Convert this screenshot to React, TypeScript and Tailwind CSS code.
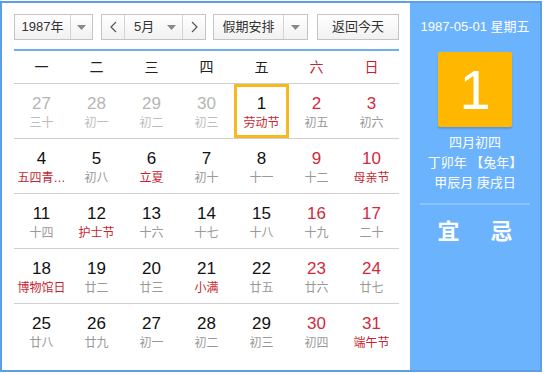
import { ReactNode } from 'react';

type Day = { n: number; l: string; kind: 'prev' | 'cur'; red?: boolean; fest?: boolean; today?: boolean };

const weekdays = ['一', '二', '三', '四', '五', '六', '日'];

const rows: Day[][] = [
  [
    { n: 27, l: '三十', kind: 'prev' },
    { n: 28, l: '初一', kind: 'prev' },
    { n: 29, l: '初二', kind: 'prev' },
    { n: 30, l: '初三', kind: 'prev' },
    { n: 1, l: '劳动节', kind: 'cur', fest: true, today: true },
    { n: 2, l: '初五', kind: 'cur', red: true },
    { n: 3, l: '初六', kind: 'cur', red: true },
  ],
  [
    { n: 4, l: '五四青…', kind: 'cur', fest: true },
    { n: 5, l: '初八', kind: 'cur' },
    { n: 6, l: '立夏', kind: 'cur', fest: true },
    { n: 7, l: '初十', kind: 'cur' },
    { n: 8, l: '十一', kind: 'cur' },
    { n: 9, l: '十二', kind: 'cur', red: true },
    { n: 10, l: '母亲节', kind: 'cur', red: true, fest: true },
  ],
  [
    { n: 11, l: '十四', kind: 'cur' },
    { n: 12, l: '护士节', kind: 'cur', fest: true },
    { n: 13, l: '十六', kind: 'cur' },
    { n: 14, l: '十七', kind: 'cur' },
    { n: 15, l: '十八', kind: 'cur' },
    { n: 16, l: '十九', kind: 'cur', red: true },
    { n: 17, l: '二十', kind: 'cur', red: true },
  ],
  [
    { n: 18, l: '博物馆日', kind: 'cur', fest: true },
    { n: 19, l: '廿二', kind: 'cur' },
    { n: 20, l: '廿三', kind: 'cur' },
    { n: 21, l: '小满', kind: 'cur', fest: true },
    { n: 22, l: '廿五', kind: 'cur' },
    { n: 23, l: '廿六', kind: 'cur', red: true },
    { n: 24, l: '廿七', kind: 'cur', red: true },
  ],
  [
    { n: 25, l: '廿八', kind: 'cur' },
    { n: 26, l: '廿九', kind: 'cur' },
    { n: 27, l: '初一', kind: 'cur' },
    { n: 28, l: '初二', kind: 'cur' },
    { n: 29, l: '初三', kind: 'cur' },
    { n: 30, l: '初四', kind: 'cur', red: true },
    { n: 31, l: '端午节', kind: 'cur', red: true, fest: true },
  ],
];

const Caret = () => (
  <svg width="9" height="5" viewBox="0 0 9 5">
    <path d="M0 0h9L4.5 5z" fill="#888" />
  </svg>
);

// thin chevron for the month arrows
const Chevron = ({ left }: { left?: boolean }) => (
  <svg width="7" height="12" viewBox="0 0 7 12">
    <path d={left ? 'M6 1L1 6l5 5' : 'M1 1l5 5-5 5'} fill="none" stroke="#555" strokeWidth="1.2" />
  </svg>
);

const Box = ({ className, children }: { className: string; children: ReactNode }) => (
  <div
    className={`flex h-[26px] items-stretch border border-[#c4c4c4] bg-gradient-to-b from-white to-[#f1f1f1] text-[13px] text-[#333] ${className}`}
  >
    {children}
  </div>
);

const Cell = ({ d }: { d: Day }) => {
  const numColor = d.kind === 'prev' ? 'text-[#b5b5b5]' : d.red ? 'text-[#d22a3c]' : 'text-[#111]';
  const lunarColor = d.fest ? 'text-[#c91f30]' : d.kind === 'prev' ? 'text-[#bcbcbc]' : 'text-[#999]';
  return (
    <div
      className={`flex h-[54px] flex-col items-center ${
        d.today ? 'border-[3px] border-[#f6b922] pt-[7px]' : 'pt-[10px]'
      }`}
    >
      <span className={`font-['Liberation_Sans',sans-serif] text-[17px] leading-[20px] ${numColor}`}>{d.n}</span>
      <span className={`whitespace-nowrap text-[12px] leading-[18px] ${lunarColor}`}>{d.l}</span>
    </div>
  );
};

const App = () => {
  return (
    <div className="h-[374px] w-[544px] bg-white pt-px font-['Liberation_Sans','Noto_Sans_CJK_SC',sans-serif]">
      <div className="flex h-[371px] w-[542px] border-2 border-[#5c9fe6]">
        <div className="w-[408px] px-[12px] pt-[11px]">
          <div className="flex w-[385px] items-center">
            <Box className="w-[79px]">
              <span className="flex flex-1 items-center justify-center">1987年</span>
              <span className="flex w-[22px] items-center justify-center border-l border-[#d4d4d4]">
                <Caret />
              </span>
            </Box>
            <Box className="ml-[8px] w-[105px]">
              <span className="flex w-[23px] items-center justify-center border-r border-[#d4d4d4]">
                <Chevron left />
              </span>
              <span className="flex flex-1 items-center justify-between pl-[9px] pr-[6px]">
                5月
                <Caret />
              </span>
              <span className="flex w-[23px] items-center justify-center border-l border-[#d4d4d4]">
                <Chevron />
              </span>
            </Box>
            <Box className="ml-[7px] w-[95px]">
              <span className="flex flex-1 items-center justify-center">假期安排</span>
              <span className="flex w-[24px] items-center justify-center border-l border-[#d4d4d4]">
                <Caret />
              </span>
            </Box>
            <Box className="ml-[9px] w-[82px] justify-center">
              <span className="flex items-center">返回今天</span>
            </Box>
          </div>
          <div className="mt-[9px] h-[2px] w-[385px] bg-[#6eaff0]" />
          <div className="grid h-[33px] w-[385px] grid-cols-7 items-center border-b border-[#cfcfcf] text-[14px]">
            {weekdays.map((w, i) => (
              <span key={w} className={`text-center ${i > 4 ? 'text-[#c91f30]' : 'text-[#222]'}`}>
                {w}
              </span>
            ))}
          </div>
          {rows.map((r, i) => (
            <div
              key={i}
              className={`grid w-[385px] grid-cols-7 ${i < 4 ? 'border-b border-[#cfcfcf]' : ''}`}
            >
              {r.map((d) => (
                <Cell key={`${d.kind}${d.n}`} d={d} />
              ))}
            </div>
          ))}
        </div>
        <div className="flex flex-1 flex-col items-center bg-[#6cb3fe] text-white">
          <div className="mt-[14px] text-[13px] leading-[20px]">1987-05-01 星期五</div>
          <div className="mt-[15px] flex h-[75px] w-[74px] items-center justify-center rounded-[2px] bg-[#ffb700] font-['Liberation_Sans',sans-serif] text-[56px] shadow-[0_2px_2px_rgba(0,0,0,0.15)]">
            1
          </div>
          <div className="mt-[6px] text-[13px] leading-[20px]">四月初四</div>
          <div className="text-[13px] leading-[20px]">丁卯年 【兔年】</div>
          <div className="text-[13px] leading-[20px]">甲辰月 庚戌日</div>
          <div className="mt-[10px] h-[2px] w-[110px] bg-[#8ec5ff]" />
          <div className="mt-[13px] flex gap-[31px] text-[22px] font-bold leading-[28px]">
            <span>宜</span>
            <span>忌</span>
          </div>
        </div>
      </div>
    </div>
  );
};

export default App;
